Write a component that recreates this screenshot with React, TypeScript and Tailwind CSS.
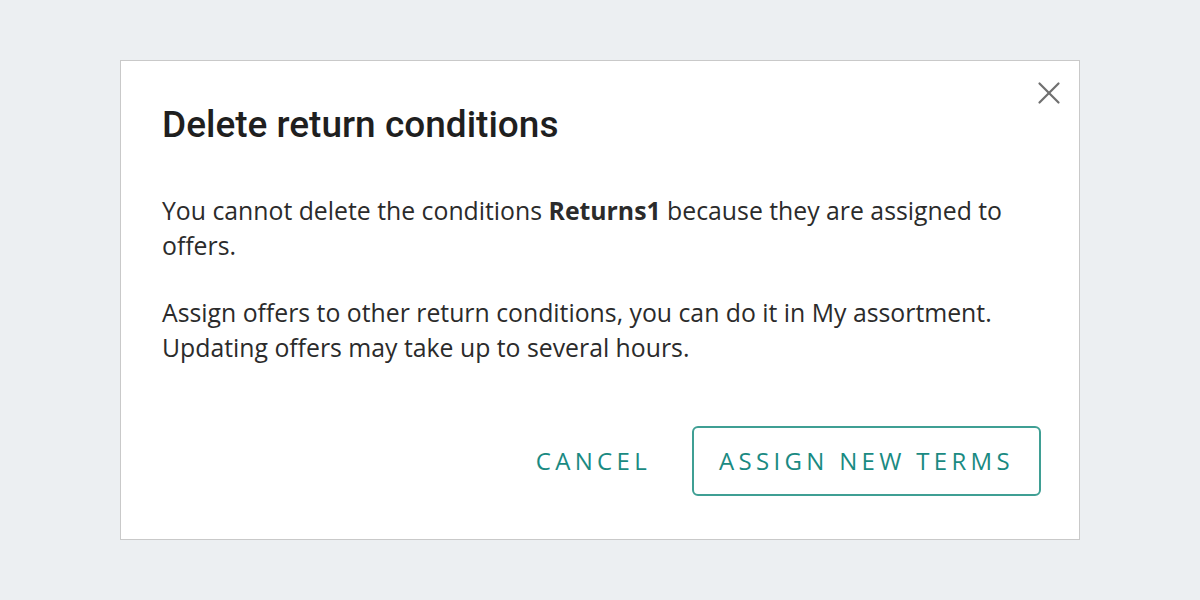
import { X } from "lucide-react";

export default function App() {
  return (
    <div className="w-[1200px] h-[600px] bg-[#eceff2] flex items-center justify-center">
      <div className="relative w-[960px] h-[480px] bg-white border border-[#c9c9c9] pl-[41px] pr-[38px] pt-[42px] flex flex-col">
        <button className="absolute top-[13px] right-[11px] text-[#707070]" aria-label="Close">
          <X size={38} strokeWidth={1.4} />
        </button>
        <h2 className="font-['Roboto',sans-serif] font-medium text-[37px] leading-[44px] text-[#1f1f1f]">
          Delete return conditions
        </h2>
        <div className="mt-[46px] pr-[3px] font-['Open_Sans',sans-serif] text-[24.8px] leading-[35px] text-[#2b2b2b]">
          <p>
            You cannot delete the conditions <span className="font-bold">Returns1</span> because they are assigned to
            offers.
          </p>
          <p className="mt-[32px]">
            Assign offers to other return conditions, you can do it in My assortment.
            <br />
            Updating offers may take up to several hours.
          </p>
        </div>
        <div className="mt-auto mb-[43px] flex justify-end items-center gap-[41px] font-['Open_Sans',sans-serif] text-[24px] tracking-[0.18em] text-[#1a8a82]">
          <button className="uppercase">Cancel</button>
          <button className="uppercase h-[70px] px-[25px] border-2 border-[#3f9f94] rounded-[6px]">
            Assign new terms
          </button>
        </div>
      </div>
    </div>
  );
}
